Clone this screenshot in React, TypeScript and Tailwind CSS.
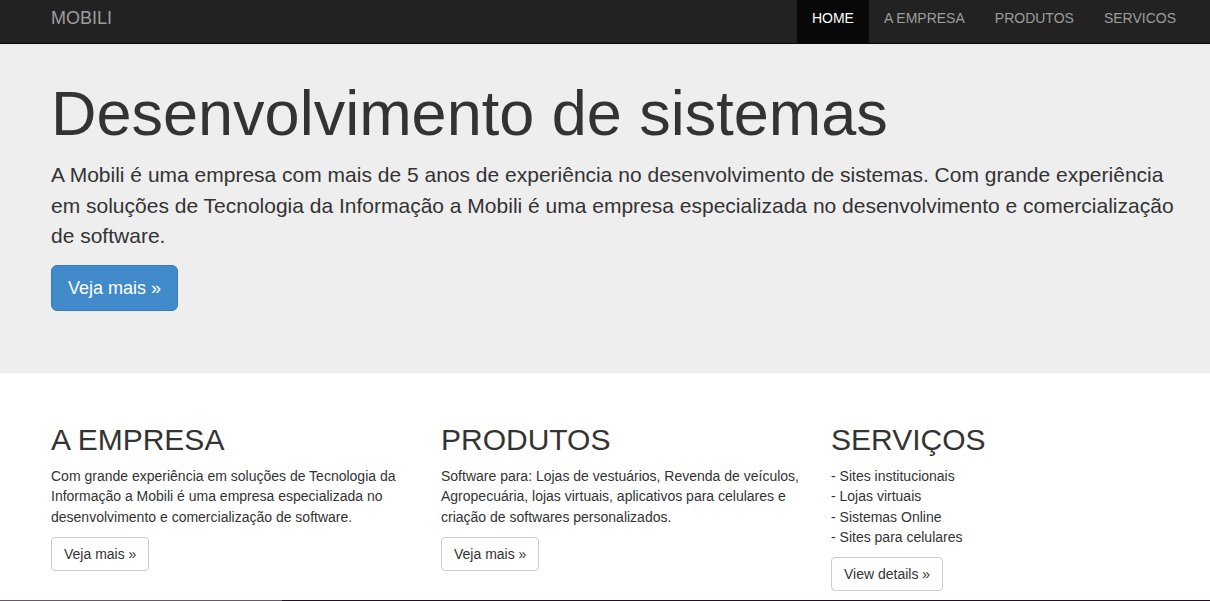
export default function App() {
  const nav = ["HOME", "A EMPRESA", "PRODUTOS", "SERVICOS"];

  return (
    <div className="min-h-[601px] bg-white font-['Liberation_Sans',Arial,sans-serif] text-[#333]">
      {/* Navbar */}
      <nav className="h-[44px] border-b border-[#080808] bg-[#222]">
        <div className="ml-[36px] flex h-[43px] w-[1170px] items-stretch justify-between px-[15px]">
          <a className="pt-[8px] text-[18px] leading-[20px] text-[#9d9d9d]" href="#">
            MOBILI
          </a>
          <ul className="flex">
            {nav.map((item, i) => (
              <li key={item}>
                <a
                  href="#"
                  className={
                    i === 0
                      ? "block h-full bg-[#080808] px-[15px] pt-[8px] text-[14px] leading-[20px] text-white"
                      : "block h-full px-[15px] pt-[8px] text-[14px] leading-[20px] text-[#9d9d9d]"
                  }
                >
                  {item}
                </a>
              </li>
            ))}
          </ul>
        </div>
      </nav>

      {/* Jumbotron */}
      <section className="h-[329px] bg-[#eee] pt-[35px]">
        <div className="ml-[36px] w-[1170px] px-[15px]">
          <h1 className="text-[63px] leading-[69px] text-[#333]">Desenvolvimento de sistemas</h1>
          <p className="mt-[12px] text-[21px] leading-[30.5px] text-[#333]">
            A Mobili é uma empresa com mais de 5 anos de experiência no desenvolvimento de sistemas. Com grande
            experiência em soluções de Tecnologia da Informação a Mobili é uma empresa especializada no
            desenvolvimento e comercialização de software.
          </p>
          <a
            href="#"
            className="mt-[13px] inline-block rounded-[6px] border border-[#357ebd] bg-[#428bca] px-[16px] py-[10px] text-[18px] leading-[24px] text-white"
          >
            Veja mais »
          </a>
        </div>
      </section>

      {/* Columns */}
      <section className="h-[227px] pt-[50px]">
        <div className="ml-[36px] grid w-[1170px] grid-cols-3">
          <div className="px-[15px]">
            <h2 className="text-[30px] leading-[33px]">A EMPRESA</h2>
            <p className="mt-[10px] text-[14px] leading-[20.3px]">
              Com grande experiência em soluções de Tecnologia da Informação a Mobili é uma empresa especializada no
              desenvolvimento e comercialização de software.
            </p>
            <a
              href="#"
              className="mt-[10px] inline-block rounded-[4px] border border-[#ccc] bg-white px-[12px] py-[6px] text-[14px] leading-[20px] text-[#333]"
            >
              Veja mais »
            </a>
          </div>
          <div className="px-[15px]">
            <h2 className="text-[30px] leading-[33px]">PRODUTOS</h2>
            <p className="mt-[10px] text-[14px] leading-[20.3px]">
              Software para: Lojas de vestuários, Revenda de veículos, Agropecuária, lojas virtuais, aplicativos para
              celulares e criação de softwares personalizados.
            </p>
            <a
              href="#"
              className="mt-[10px] inline-block rounded-[4px] border border-[#ccc] bg-white px-[12px] py-[6px] text-[14px] leading-[20px] text-[#333]"
            >
              Veja mais »
            </a>
          </div>
          <div className="px-[15px]">
            <h2 className="text-[30px] leading-[33px]">SERVIÇOS</h2>
            <p className="mt-[10px] text-[14px] leading-[20.3px]">
              - Sites institucionais
              <br />- Lojas virtuais
              <br />- Sistemas Online
              <br />- Sites para celulares
            </p>
            <a
              href="#"
              className="mt-[10px] inline-block rounded-[4px] border border-[#ccc] bg-white px-[12px] py-[6px] text-[14px] leading-[20px] text-[#333]"
            >
              View details »
            </a>
          </div>
        </div>
      </section>

      <div className="flex h-px">
        <div className="w-[282px] bg-[#6a5868]" />
        <div className="flex-1 bg-[#2c0c2c]" />
      </div>
    </div>
  );
}
